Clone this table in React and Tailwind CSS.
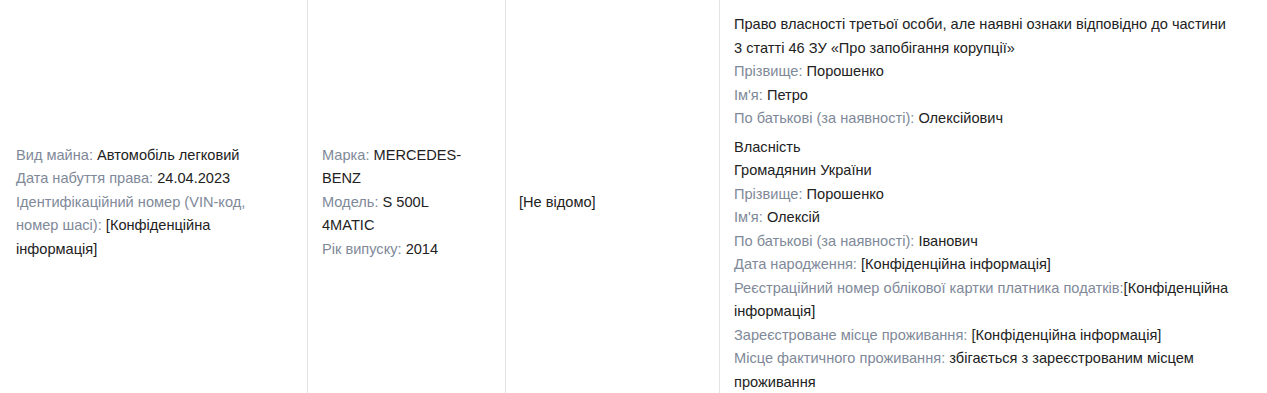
import React from "react";

// Labelled value line: grey label, dark value
function Field({ label, value, tight }) {
  return (
    <div>
      <span className="text-[#808999]">{label}{tight ? "" : " "}</span>
      <span>{value}</span>
    </div>
  );
}

const owners = [
  {
    lines: [
      "Право власності третьої особи, але наявні ознаки відповідно до частини 3 статті 46 ЗУ «Про запобігання корупції»",
    ],
    fields: [
      ["Прізвище:", "Порошенко"],
      ["Ім'я:", "Петро"],
      ["По батькові (за наявності):", "Олексійович"],
    ],
  },
  {
    lines: ["Власність", "Громадянин України"],
    fields: [
      ["Прізвище:", "Порошенко"],
      ["Ім'я:", "Олексій"],
      ["По батькові (за наявності):", "Іванович"],
      ["Дата народження:", "[Конфіденційна інформація]"],
      ["Реєстраційний номер облікової картки платника податків:", "[Конфіденційна інформація]", true],
      ["Зареєстроване місце проживання:", "[Конфіденційна інформація]"],
      ["Місце фактичного проживання:", "збігається з зареєстрованим місцем проживання"],
    ],
  },
];

export default function App() {
  return (
    <div
      className="bg-white text-[14.6px] leading-[23.5px] text-[#222]"
      style={{ fontFamily: '"Liberation Sans", Arial, sans-serif' }}
    >
      <div className="flex w-[1300px] items-stretch">
        {/* Property */}
        <div className="flex w-[307px] shrink-0 items-center pl-[16px]">
          <div className="w-[262px]">
            <Field label="Вид майна:" value="Автомобіль легковий" />
            <Field label="Дата набуття права:" value="24.04.2023" />
            <Field label="Ідентифікаційний номер (VIN-код, номер шасі):" value="[Конфіденційна інформація]" />
          </div>
        </div>

        {/* Vehicle */}
        <div className="flex w-[198px] shrink-0 items-center border-l border-[#e3e3e3] pl-[14px]">
          <div className="w-[150px]">
            <Field label="Марка:" value="MERCEDES-BENZ" />
            <Field label="Модель:" value="S 500L 4MATIC" />
            <Field label="Рік випуску:" value="2014" />
          </div>
        </div>

        {/* Cost */}
        <div className="flex w-[214px] shrink-0 items-center border-l border-[#e3e3e3] pl-[13px]">
          <div>[Не відомо]</div>
        </div>

        {/* Owners */}
        <div className="shrink-0 border-l border-[#e3e3e3] pt-[13px] pb-[11px] pl-[14px]">
          <div className="flex w-[498px] flex-col gap-[5px]">
            {owners.map((o, i) => (
              <div key={i}>
                {o.lines.map((l, j) => (
                  <div key={j}>{l}</div>
                ))}
                {o.fields.map(([label, value, tight], j) => (
                  <Field key={j} label={label} value={value} tight={tight} />
                ))}
              </div>
            ))}
          </div>
        </div>
      </div>
    </div>
  );
}
